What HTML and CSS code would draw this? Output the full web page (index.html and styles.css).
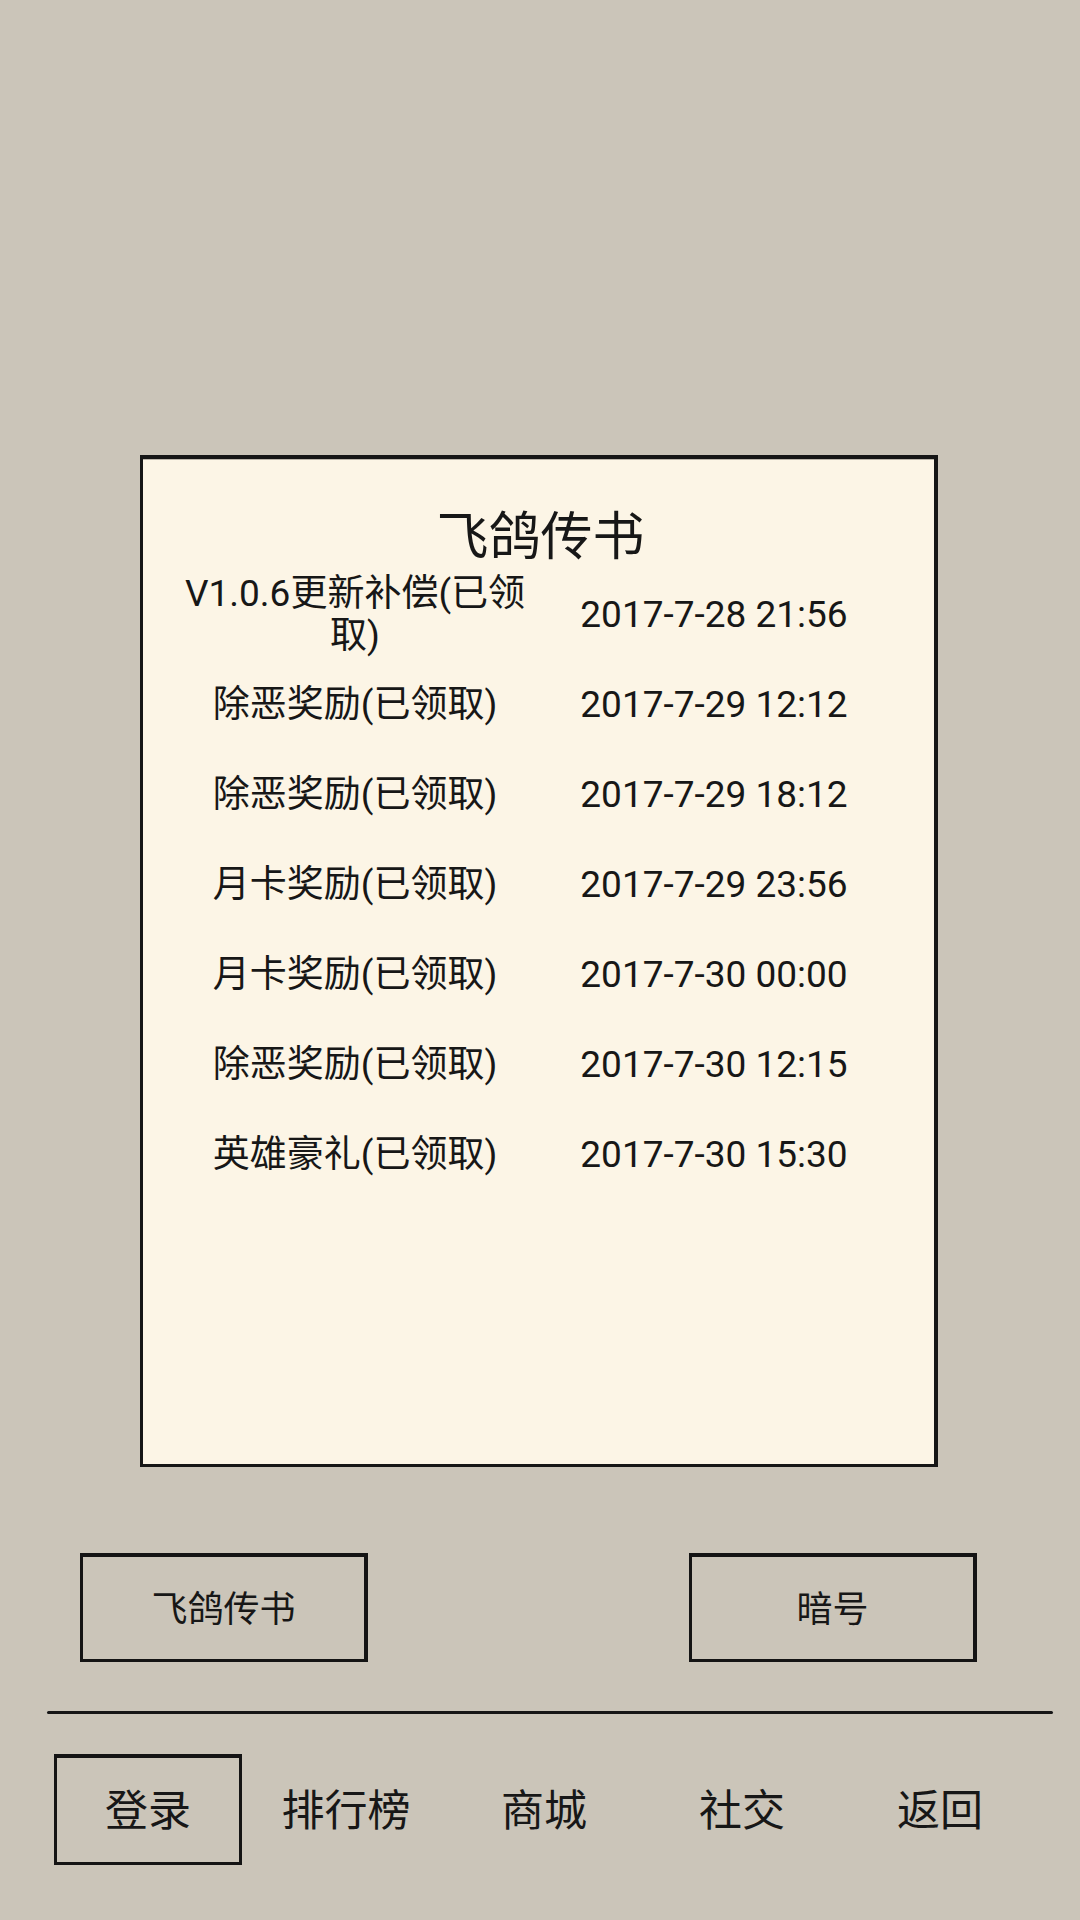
FILE: index.html
```html
<!DOCTYPE html>
<html lang="zh-CN">
<head>
<meta charset="utf-8">
<title>飞鸽传书</title>
<link rel="stylesheet" href="styles.css">
</head>
<body>
<div class="screen">
  <section class="panel">
    <h1 class="panel-title">飞鸽传书</h1>
    <div class="mail-list">
      <div class="mail-row"><div class="mail-name">V1.0.6更新补偿(已领取)</div><div class="mail-time">2017-7-28 21:56</div></div>
      <div class="mail-row"><div class="mail-name">除恶奖励(已领取)</div><div class="mail-time">2017-7-29 12:12</div></div>
      <div class="mail-row"><div class="mail-name">除恶奖励(已领取)</div><div class="mail-time">2017-7-29 18:12</div></div>
      <div class="mail-row"><div class="mail-name">月卡奖励(已领取)</div><div class="mail-time">2017-7-29 23:56</div></div>
      <div class="mail-row"><div class="mail-name">月卡奖励(已领取)</div><div class="mail-time">2017-7-30 00:00</div></div>
      <div class="mail-row"><div class="mail-name">除恶奖励(已领取)</div><div class="mail-time">2017-7-30 12:15</div></div>
      <div class="mail-row"><div class="mail-name">英雄豪礼(已领取)</div><div class="mail-time">2017-7-30 15:30</div></div>
    </div>
  </section>

  <div class="actions">
    <div class="sketch-btn">飞鸽传书</div>
    <div class="sketch-btn">暗号</div>
  </div>

  <div class="divider"></div>

  <nav class="nav">
    <div class="nav-item active">登录</div>
    <div class="nav-item">排行榜</div>
    <div class="nav-item">商城</div>
    <div class="nav-item">社交</div>
    <div class="nav-item">返回</div>
  </nav>
</div>
</body>
</html>
```

FILE: styles.css
```css
html, body {
  margin: 0;
  padding: 0;
}

body {
  width: 1080px;
  height: 1920px;
  background: #cbc5b9;
  font-family: Roboto, "Noto Sans CJK SC", sans-serif;
  color: #171717;
  overflow: hidden;
}

.screen {
  padding-top: 455px;
}

.panel {
  box-sizing: border-box;
  width: 798px;
  height: 1012px;
  margin-left: 140px;
  background: #fcf5e6;
  border: 3px solid #161616;
  border-top-width: 4px;
  border-right-width: 4px;
  padding: 41px 42px 0 32px;
  box-shadow: inset 0 1px 0 rgba(0,0,0,0.25);
}

.panel-title {
  box-sizing: border-box;
  margin: 0 -46px 0 -32px;
  height: 70px;
  padding-top: 6px;
  line-height: 64px;
  text-align: center;
  font-size: 52px;
  font-weight: 400;
}

.mail-list {
  display: flex;
  flex-direction: column;
}

.mail-row {
  display: grid;
  grid-template-columns: 360px 358px;
  height: 90px;
  align-items: center;
  text-align: center;
  font-size: 37px;
  line-height: 42px;
}

.actions {
  display: flex;
  justify-content: space-between;
  margin-top: 86px;
  padding: 0 103px 0 80px;
}

.sketch-btn {
  box-sizing: border-box;
  width: 288px;
  height: 109px;
  border: 3px solid #141414;
  border-top-width: 4px;
  border-right-width: 4px;
  display: flex;
  align-items: center;
  justify-content: center;
  font-size: 36px;
  padding-bottom: 4px;
}

.divider {
  margin-top: 49px;
  margin-left: 47px;
  width: 1006px;
  height: 3px;
  background: #161616;
  border-radius: 2px;
}

.nav {
  display: grid;
  grid-template-columns: repeat(5, 198px);
  margin-top: 40px;
  padding-left: 49px;
}

.nav-item {
  box-sizing: border-box;
  height: 111px;
  margin: 0 5px;
  padding-bottom: 6px;
  display: flex;
  align-items: center;
  justify-content: center;
  font-size: 43px;
  border: 3px solid transparent;
}

.nav-item.active {
  border-color: #141414;
  border-top-width: 4px;
}
```
